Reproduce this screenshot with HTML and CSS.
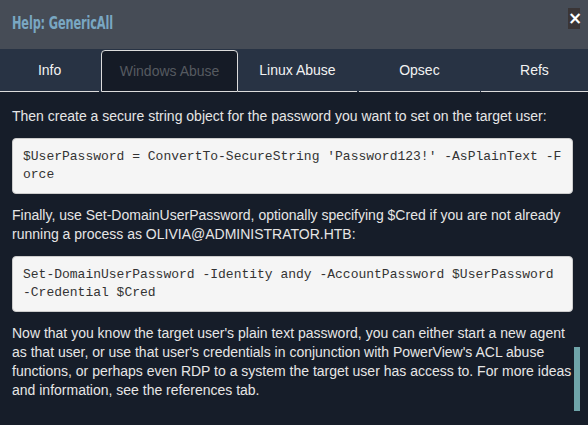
FILE: index.html
```html
<!DOCTYPE html>
<html>
<head>
<meta charset="utf-8">
<link rel="stylesheet" href="styles.css">
</head>
<body>
<div class="modal">
  <div class="header">
    <h4 class="title">Help: GenericAll</h4>
    <button class="close">&times;</button>
  </div>
  <ul class="tabs">
    <li class="tab t-info">Info</li>
    <li class="tab t-win active">Windows Abuse</li>
    <li class="tab t-linux">Linux Abuse</li>
    <li class="tab t-opsec">Opsec</li>
    <li class="tab t-refs">Refs</li>
  </ul>
  <div class="body">
    <p>Then create a secure string object for the password you want to set on the target user:</p>
    <pre>$UserPassword = ConvertTo-SecureString 'Password123!' -AsPlainText -Force</pre>
    <p>Finally, use Set-DomainUserPassword, optionally specifying $Cred if you are not already running a process as OLIVIA@ADMINISTRATOR.HTB:</p>
    <pre>Set-DomainUserPassword -Identity andy -AccountPassword $UserPassword
-Credential $Cred</pre>
    <p>Now that you know the target user's plain text password, you can either start a new agent as that user, or use that user's credentials in conjunction with PowerView's ACL abuse functions, or perhaps even RDP to a system the target user has access to. For more ideas and information, see the references tab.</p>
    <div class="thumb"></div>
  </div>
</div>
</body>
</html>
```
FILE: styles.css
```css
html, body {
  margin: 0;
  padding: 0;
  background: #161d29;
}
.modal {
  width: 588px;
  height: 425px;
  display: flex;
  flex-direction: column;
  font-family: "Liberation Sans", Arial, sans-serif;
  overflow: hidden;
}
.header {
  height: 49px;
  box-sizing: border-box;
  background: #464c56;
  display: flex;
  justify-content: space-between;
  align-items: flex-start;
  padding: 0 8px 0 12px;
}
.title {
  margin: 13px 0 0 0;
  font-family: "DejaVu Sans Condensed", "Liberation Sans Narrow", sans-serif;
  font-weight: bold;
  font-size: 18px;
  line-height: 20px;
  color: #79a7c2;
  letter-spacing: -0.2px;
  transform: scaleX(0.7);
  transform-origin: left center;
  white-space: nowrap;
}
.close {
  margin-top: 8px;
  width: 12px;
  height: 21px;
  padding: 0;
  border: none;
  background: #3a3536;
  color: #ffffff;
  font-family: "DejaVu Sans", sans-serif;
  font-weight: bold;
  font-size: 17px;
  line-height: 21px;
  text-align: center;
}
.tabs {
  list-style: none;
  margin: 0;
  padding: 0;
  height: 43px;
  background: #283344;
  display: flex;
  flex-shrink: 0;
}
.tab {
  box-sizing: border-box;
  height: 43px;
  padding-top: 0;
  display: flex;
  align-items: center;
  justify-content: center;
  color: #f2f2f2;
  font-size: 14px;
  border-bottom: 1px solid #dcdcdc;
}
.t-info { width: 100px; margin-right: 2px; }
.t-win { width: 138px; }
.t-linux { width: 120px; margin-right: 2px; }
.t-opsec { width: 122px; margin-right: 1px; }
.t-refs { width: 108px; }
.tab.active {
  color: #555a60;
  background: #151b26;
  border: 1px solid #dcdcdc;
  border-radius: 4px 4px 0 0;
  margin-top: 1px;
  height: 42px;
  padding-bottom: 1px;
}
.body {
  position: relative;
  flex: 1;
  padding: 15px 15px 0 12px;
  color: #e6e6e6;
  font-size: 14px;
  line-height: 19px;
}
.body p {
  margin: 0 0 12px 0;
}
.body pre {
  margin: 0 0 12px 0;
  padding: 9px 10px;
  background: #f5f5f5;
  border: 1px solid #cccccc;
  border-radius: 4px;
  color: #333333;
  font-family: "Liberation Mono", "Courier New", monospace;
  font-size: 13px;
  line-height: 18px;
  white-space: pre-wrap;
  word-break: break-all;
}
.thumb {
  position: absolute;
  left: 574px;
  top: 255px;
  width: 6px;
  height: 64px;
  background: #6fa4a9;
}
```
